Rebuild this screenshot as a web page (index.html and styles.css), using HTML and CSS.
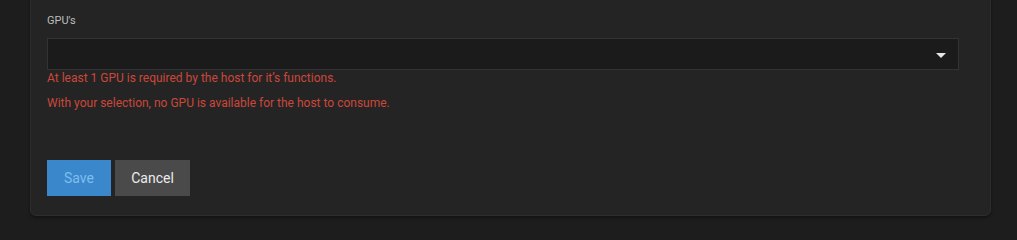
FILE: index.html
```html
<!DOCTYPE html>
<html>
<head>
<meta charset="utf-8">
<link rel="stylesheet" href="styles.css">
</head>
<body>
<div class="page">
  <div class="card">
    <div class="field">
      <label class="field-label">GPU's</label>
      <div class="select">
        <span class="select-arrow"></span>
      </div>
      <div class="error first">At least 1 GPU is required by the host for it’s functions.</div>
      <div class="error second">With your selection, no GPU is available for the host to consume.</div>
    </div>
    <div class="actions">
      <button class="btn btn-save" disabled>Save</button>
      <button class="btn btn-cancel">Cancel</button>
    </div>
  </div>
</div>
</body>
</html>
```
FILE: styles.css
```css
html, body {
  margin: 0;
  padding: 0;
  background: #1d1d1d;
  height: 100%;
  overflow: hidden;
}
body {
  font-family: Roboto, "Liberation Sans", sans-serif;
}
.page {
  padding: 0 26px 0 30px;
}
.card {
  margin-top: -10px;
  background: #242424;
  border: 1px solid #2d2d2d;
  border-radius: 0 0 6px 6px;
  box-shadow: 0 2px 3px rgba(0, 0, 0, 0.35);
  padding: 23px 31px 19px 16px;
}
.field {
  display: flex;
  flex-direction: column;
}
.field-label {
  font-size: 11px;
  line-height: 14px;
  height: 14px;
  color: #bdbdbd;
}
.select {
  margin-top: 10px;
  height: 30px;
  background: #1b1b1b;
  border: 1px solid #333333;
  display: flex;
  align-items: center;
  justify-content: flex-end;
  padding-right: 12px;
}
.select-arrow {
  width: 0;
  height: 0;
  border-left: 5px solid transparent;
  border-right: 5px solid transparent;
  border-top: 5px solid #e6e6e6;
  margin-top: 2px;
}
.error {
  font-size: 12px;
  line-height: 14px;
  color: #cc473b;
}
.error.first {
  margin-top: 1px;
}
.error.second {
  margin-top: 11px;
}
.actions {
  margin-top: 50px;
  display: flex;
  gap: 4px;
}
.btn {
  font-family: Roboto, "Liberation Sans", sans-serif;
  font-size: 14px;
  height: 36px;
  border: none;
  padding: 0;
  border-radius: 0;
}
.btn-save {
  width: 64px;
  background: #3a88cb;
  color: #80bdee;
}
.btn-cancel {
  width: 75px;
  background: #4a4a4a;
  color: #ececec;
}
```
